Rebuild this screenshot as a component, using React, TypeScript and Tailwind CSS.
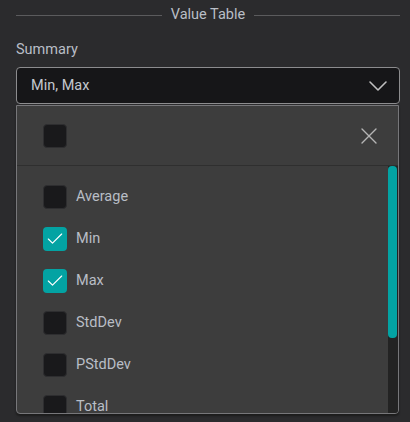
import { Check, ChevronDown, X } from 'lucide-react'

const options = [
  { label: 'Average', checked: false },
  { label: 'Min', checked: true },
  { label: 'Max', checked: true },
  { label: 'StdDev', checked: false },
  { label: 'PStdDev', checked: false },
  { label: 'Total', checked: false },
]

function Box({ checked }: { checked: boolean }) {
  return checked ? (
    <div className="flex h-6 w-6 shrink-0 items-center justify-center rounded-[4px] bg-[#03a3a3]">
      <Check className="h-[20px] w-[20px] text-white" strokeWidth={1.4} />
    </div>
  ) : (
    <div className="h-6 w-6 shrink-0 rounded-[4px] border border-[#2e2e30] bg-[#19191b]" />
  )
}

export default function App() {
  return (
    <div className="h-[422px] w-[410px] overflow-hidden bg-[#2b2b2d] pl-4 pr-[10px] font-['Roboto',sans-serif] text-[#b9bec6]">
      <div className="flex h-[30px] items-center gap-[9px]">
        <div className="h-px flex-1 bg-[#5b5b5d]" />
        <span className="text-[14.5px]">Value Table</span>
        <div className="h-px flex-1 bg-[#5b5b5d]" />
      </div>
      <div className="pt-[10px] text-[14.5px] leading-[20px]">Summary</div>
      <div className="mt-[7px] flex h-[37px] items-center justify-between rounded-[4px] border border-[#8c8c8e] bg-[#161618] pl-[14px] pr-[5px]">
        <span className="text-[14.5px] text-[#c3c8cf]">Min, Max</span>
        <ChevronDown className="h-8 w-8 text-[#c0c0c0]" strokeWidth={1.2} />
      </div>
      <div className="mr-px mt-[1px] flex h-[309px] flex-col overflow-hidden rounded-b-[4px] border border-[#77777a] bg-[#3d3d3d] shadow-[0_2px_2px_#1c1c1c]">
        <div className="flex h-[60px] shrink-0 items-center justify-between border-b border-[#2f2f2f] pl-[26px] pr-[15px]">
          <Box checked={false} />
          <X className="h-7 w-7 text-[#b5b5b5]" strokeWidth={1.2} />
        </div>
        <div className="flex min-h-0 flex-1">
          <div className="flex-1 pt-[10px] pl-[26px]">
            {options.map((o) => (
              <div key={o.label} className="flex h-[42px] items-center gap-[9px]">
                <Box checked={o.checked} />
                <span className="text-[14.5px]">{o.label}</span>
              </div>
            ))}
          </div>
          <div className="flex w-[10px] flex-col bg-[#232323] pr-[1px]">
            <div className="h-[172px] rounded-[4px] bg-[#03a3a3]" />
          </div>
        </div>
      </div>
    </div>
  )
}
